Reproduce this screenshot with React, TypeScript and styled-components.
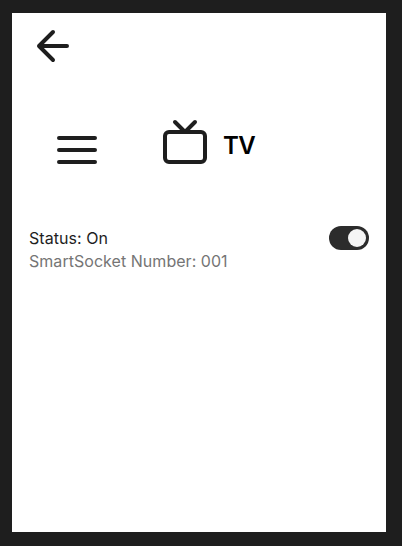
import React from "react";
import styled, { createGlobalStyle } from "styled-components";

const GlobalStyle = createGlobalStyle`
  *, *::before, *::after { box-sizing: border-box; }
  body { margin: 0; background: #1e1e1e; font-family: Inter, sans-serif; }
`;

const Frame = styled.div`
  height: 546px;
  padding: 13px 16px 14px 12px;
  background: #1e1e1e;
`;

const Screen = styled.main`
  height: 100%;
  background: #ffffff;
  display: flex;
  flex-direction: column;
`;

const IconButton = styled.button`
  display: flex;
  padding: 0;
  border: 0;
  background: none;
  color: #1e1e1e;
`;

const TopBar = styled.header`
  display: flex;
  padding: 9px 0 0 17px;
`;

const DeviceRow = styled.section`
  display: flex;
  align-items: flex-end;
  height: 56px;
  margin-top: 48px;
  padding-left: 41px;
`;

const DeviceTitle = styled.div`
  display: flex;
  align-self: flex-start;
  margin-left: 60px;
  gap: 14px;
  color: #1e1e1e;
`;

const DeviceName = styled.h1`
  margin: 0;
  padding-top: 13px;
  font-size: 24px;
  line-height: 30px;
  font-weight: 600;
  letter-spacing: -0.02em;
  color: #000000;
`;

const StatusField = styled.section`
  margin-top: 52px;
  padding: 0 17px;
`;

const StatusLine = styled.div`
  display: flex;
  align-items: center;
  justify-content: space-between;
  height: 24px;
`;

const Label = styled.span`
  font-size: 16px;
  line-height: 22px;
  letter-spacing: 0.04px;
  color: #1e1e1e;
`;

const Description = styled.p`
  margin: 0;
  font-size: 16px;
  line-height: 22px;
  letter-spacing: 0.04px;
  color: #757575;
`;

const Switch = styled.button`
  display: flex;
  align-items: center;
  justify-content: flex-end;
  width: 40px;
  height: 24px;
  padding: 3px;
  border: 0;
  border-radius: 12px;
  background: #2c2c2c;
`;

const Knob = styled.span`
  width: 18px;
  height: 18px;
  border-radius: 50%;
  background: #f5f5f5;
`;

const strokeProps = {
  fill: "none",
  stroke: "currentColor",
  strokeWidth: 4,
  strokeLinecap: "round" as const,
  strokeLinejoin: "round" as const,
};

export default function App() {
  return (
    <Frame>
      <GlobalStyle />
      <Screen>
        <TopBar>
          <IconButton aria-label="Back">
            <svg width="48" height="48" viewBox="0 0 48 48" {...strokeProps}>
              <path d="M38 24H10M24 38L10 24L24 10" />
            </svg>
          </IconButton>
        </TopBar>
        <DeviceRow>
          <IconButton aria-label="Menu">
            <svg width="48" height="48" viewBox="0 0 48 48" {...strokeProps}>
              <path d="M6 24H42M6 12H42M6 36H42" />
            </svg>
          </IconButton>
          <DeviceTitle>
            <svg width="48" height="48" viewBox="0 0 48 48" {...strokeProps}>
              <path d="M34 4L24 14L14 4" />
              <rect x="4" y="14" width="40" height="30" rx="4" />
            </svg>
            <DeviceName>TV</DeviceName>
          </DeviceTitle>
        </DeviceRow>
        <StatusField>
          <StatusLine>
            <Label>Status: On</Label>
            <Switch role="switch" aria-checked="true" aria-label="Status">
              <Knob />
            </Switch>
          </StatusLine>
          <Description>SmartSocket Number: 001</Description>
        </StatusField>
      </Screen>
    </Frame>
  );
}
